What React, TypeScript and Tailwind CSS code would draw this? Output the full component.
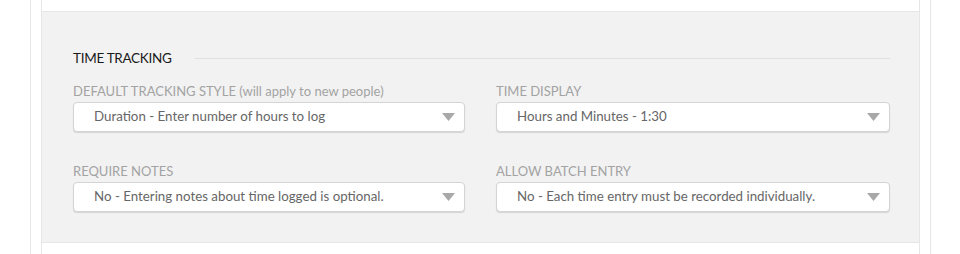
const rows = [
  [
    {
      label: "DEFAULT TRACKING STYLE (will apply to new people)",
      value: "Duration - Enter number of hours to log",
    },
    { label: "TIME DISPLAY", value: "Hours and Minutes - 1:30" },
  ],
  [
    {
      label: "REQUIRE NOTES",
      value: "No - Entering notes about time logged is optional.",
    },
    {
      label: "ALLOW BATCH ENTRY",
      value: "No - Each time entry must be recorded individually.",
    },
  ],
];

function Caret() {
  return (
    <svg width="13" height="8" viewBox="0 0 13 8" className="shrink-0">
      <path d="M0 0 H13 L6.5 8 Z" fill="#a8a8a8" />
    </svg>
  );
}

function SelectField({ label, value }: { label: string; value: string }) {
  return (
    <div className="flex flex-col">
      <label className="text-[13px] leading-[18px] text-[#a3a3a3]">{label}</label>
      <div className="mt-[2px] h-[30px] flex items-center justify-between bg-white border border-[#d4d4d4] rounded-[4px] shadow-[0_1px_1px_rgba(0,0,0,0.12)] pl-[20px] pr-[9px]">
        <span className="text-[13.3px] text-[#666]">{value}</span>
        <Caret />
      </div>
    </div>
  );
}

export default function App() {
  return (
    <div
      className="w-[960px] h-[254px] bg-white overflow-hidden"
      style={{ fontFamily: "Lato, 'Open Sans', sans-serif" }}
    >
      <div className="ml-[30px] w-[901px] h-full border-x border-[#e6e6e6]">
        <div className="mx-[10px] h-full border-x border-[#e6e6e6] pt-[11px]">
          <div className="bg-[#f2f2f2] border-y border-[#e6e6e6] h-[232px] pl-[31px] pr-[29px] pt-[36px]">
            <div className="flex items-center gap-[24px] h-[20px]">
              <h2 className="text-[13.5px] tracking-[-0.3px] text-[#1a1a1a] whitespace-nowrap">TIME TRACKING</h2>
              <div className="flex-1 h-px bg-[#e0e0e0]" />
            </div>
            <div className="mt-[14px] flex flex-col gap-[30px]">
              {rows.map((row, i) => (
                <div key={i} className="grid grid-cols-[392px_1fr] gap-[31px]">
                  {row.map((f) => (
                    <SelectField key={f.label} label={f.label} value={f.value} />
                  ))}
                </div>
              ))}
            </div>
          </div>
        </div>
      </div>
    </div>
  );
}
